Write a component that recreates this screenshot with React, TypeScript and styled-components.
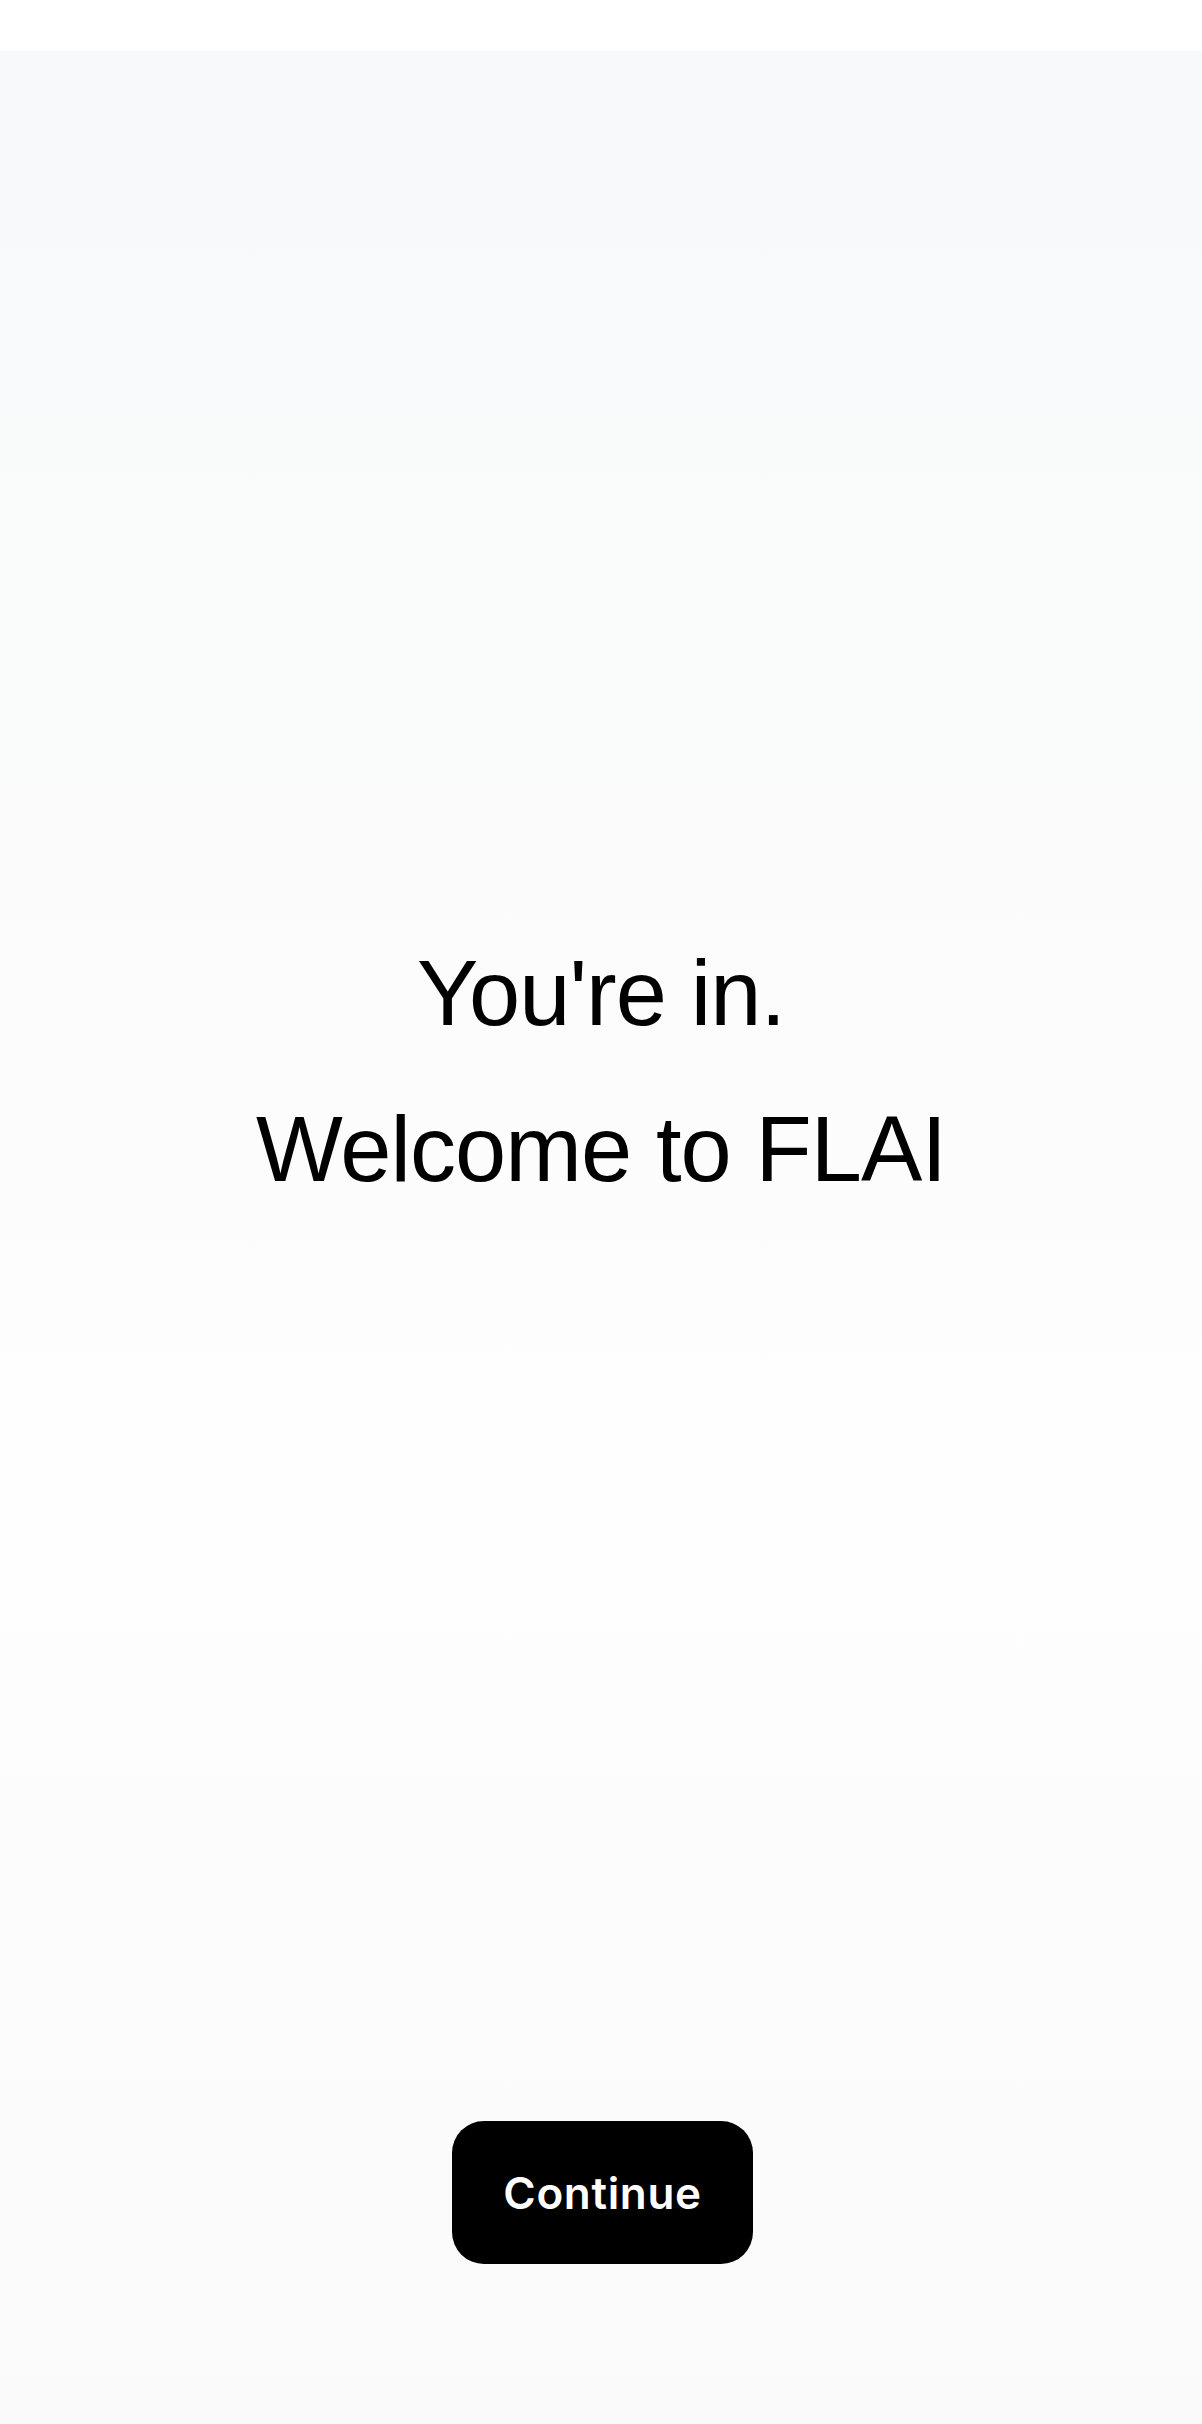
import React from "react";
import styled, { createGlobalStyle } from "styled-components";

const GlobalStyle = createGlobalStyle`
  html, body {
    margin: 0;
    padding: 0;
    background: #ffffff;
  }
  * { box-sizing: border-box; }
  #root { min-height: 2424px; }
`;

const Page = styled.div`
  display: flex;
  flex-direction: column;
  min-height: 2424px;
  width: 100%;
`;

const TopBar = styled.header`
  height: 51px;
  background: #ffffff;
  flex-shrink: 0;
`;

const Main = styled.main`
  flex: 1;
  display: flex;
  flex-direction: column;
  align-items: center;
  background: linear-gradient(180deg, #f8f9fa 0%, #fcfcfc 45%, #fefefe 60%, #fafafa 100%);
  padding-top: 887px;
  padding-bottom: 160px;
`;

const Hero = styled.section`
  display: flex;
  flex-direction: column;
  align-items: center;
  gap: 46px;
`;

const Headline = styled.h1`
  margin: 0;
  font-family: "Liberation Sans", Arial, sans-serif;
  font-weight: 400;
  font-size: 92px;
  line-height: 110px;
  letter-spacing: -0.01em;
  color: #000000;
  text-align: center;
  white-space: nowrap;
`;

const Spacer = styled.div`
  flex: 1;
`;

const PrimaryButton = styled.button`
  width: 301px;
  height: 143px;
  margin-left: 3px;
  border: none;
  border-radius: 32px;
  background: #000000;
  color: #ffffff;
  font-family: Inter, "Noto Sans", sans-serif;
  font-weight: 600;
  font-size: 44px;
  letter-spacing: 0.015em;
  cursor: pointer;
  display: flex;
  align-items: center;
  justify-content: center;
  padding: 0;
`;

export default function App() {
  return (
    <>
      <GlobalStyle />
      <Page>
        <TopBar />
        <Main>
          <Hero>
            <Headline>You're in.</Headline>
            <Headline>Welcome to FLAI</Headline>
          </Hero>
          <Spacer />
          <PrimaryButton>Continue</PrimaryButton>
        </Main>
      </Page>
    </>
  );
}
